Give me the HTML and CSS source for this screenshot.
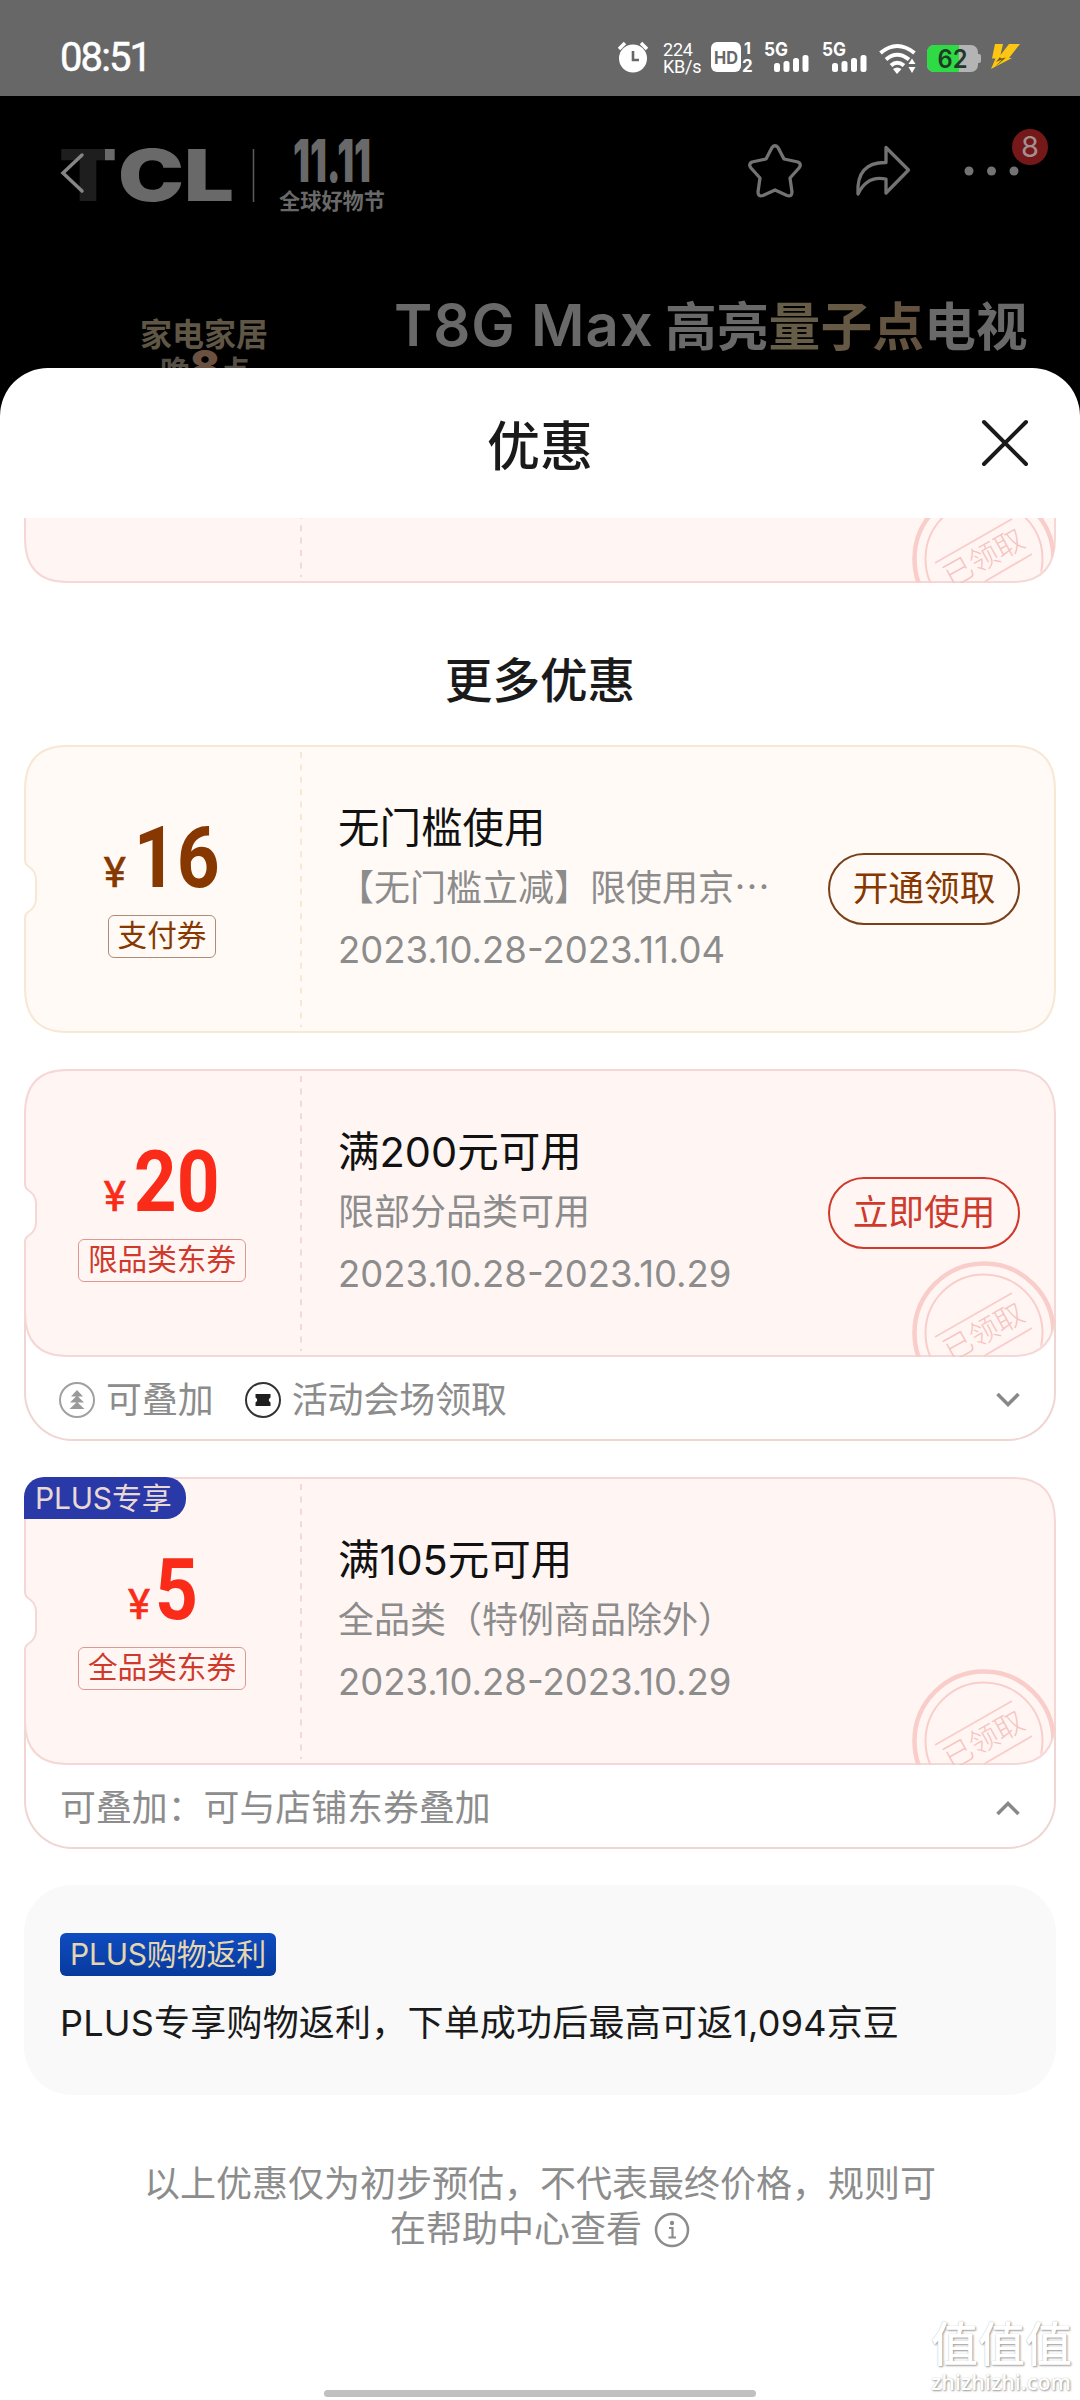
FILE: index.html
```html
<!DOCTYPE html>
<html lang="zh-CN">
<head>
<meta charset="utf-8">
<title>优惠</title>
<link rel="stylesheet" href="styles.css">
</head>
<body>
<svg class="defs" width="0" height="0" aria-hidden="true">
  <defs>
    <symbol id="ticket" viewBox="0 0 1032 288">
      <path class="ticket-shape" d="M43 1H989Q1031 1 1031 45V243Q1031 287 989 287H43Q1 287 1 243V173Q1 169 4 167Q12 162 12 154V134Q12 126 4 121Q1 119 1 115V45Q1 1 43 1Z"/>
      <path class="ticket-dash" d="M277 7V282"/>
    </symbol>
    <symbol id="stamp" viewBox="0 0 144 96">
      <g fill="none" stroke="#f9cdca">
        <circle cx="72" cy="72" r="69.500" stroke-width="4.500"/>
        <circle cx="72" cy="72" r="58.500" stroke-width="2"/>
        <path d="M23 76L100 32M72 95L120 67" stroke-width="2"/>
      </g>
      <text x="72" y="81" text-anchor="middle" transform="rotate(-29 72 71)" font-size="29" font-weight="300" fill="#f6c3bf">已领取</text>
    </symbol>
    <symbol id="signal" viewBox="0 0 46 32">
      <text x="0" y="15" font-size="19" font-weight="700" textLength="24" lengthAdjust="spacingAndGlyphs" fill="#fff">5G</text>
      <g fill="#fff"><rect x="10" y="22" width="6" height="9" rx="2.500"/><rect x="19.500" y="20" width="6" height="11" rx="2.500"/><rect x="29" y="17" width="6" height="14" rx="2.500"/><rect x="38.500" y="14" width="6" height="17" rx="2.500"/></g>
    </symbol>
  </defs>
</svg>

<div class="screen">
  <div class="status">
    <span class="clock">08:51</span>
    <div class="status-icons">
      <svg class="alarm" width="30" height="32" viewBox="0 0 30 32"><circle cx="15" cy="17.500" r="14" fill="#fff"/><path d="M1 8L7 2M29 8L23 2" stroke="#fff" stroke-width="3.500"/><path d="M15 10V19H21" fill="none" stroke="#676767" stroke-width="2.600"/></svg>
      <div class="speed"><span>224</span><span>KB/s</span></div>
      <svg class="hd" width="43" height="32" viewBox="0 0 43 32"><rect x="0" y="1" width="30" height="30" rx="6" fill="#fff"/><text x="3" y="22.500" font-size="18" font-weight="700" textLength="24" lengthAdjust="spacingAndGlyphs" fill="#676767">HD</text><text x="33" y="13" font-size="16" font-weight="700" fill="#fff">1</text><text x="31" y="31" font-size="17" font-weight="700" fill="#fff">2</text></svg>
      <svg class="sim" width="46" height="32"><use href="#signal"/></svg>
      <svg class="sim" width="46" height="32"><use href="#signal"/></svg>
      <svg class="wifi" width="37" height="32" viewBox="0 0 37 32"><g fill="none" stroke="#fff" stroke-width="4"><path d="M1.500 11Q18 -3 35.500 11"/><path d="M7 17.500Q18 8 30 17.500"/><path d="M12 23.500Q18 18 25 23.500"/></g><path d="M14 27Q18 24 22.500 27L18 32Z" fill="#fff"/><path d="M33 16.500L36.500 22H29.500ZM33 31L29.500 25H36.500Z" fill="#fff"/></svg>
      <svg class="battery" width="54" height="28" viewBox="0 0 54 28"><clipPath id="cell"><rect width="51" height="27" rx="7"/></clipPath><g clip-path="url(#cell)"><rect width="51" height="27" fill="#b4b4b4"/><rect width="32" height="27" fill="#2fdb45"/></g><path d="M51 9H52Q54 9 54 11V16Q54 18 52 18H51Z" fill="#b4b4b4"/><text x="10.500" y="22.500" font-size="25" font-weight="600" textLength="30" lengthAdjust="spacingAndGlyphs" fill="#1f3a26">62</text></svg>
      <svg class="bolt" width="30" height="26" viewBox="0 0 30 26"><path d="M4 0H12L9.500 11L18 0H29L18 14H21L0 25L4.500 14.500H1Z" fill="#fdc613"/><path d="M9 13L5 18L11 15.500L4 23L15 13.500L10 14.500Z" fill="#6b5a20"/></svg>
    </div>
  </div>

  <div class="hero">
    <div class="nav">
      <svg class="brand" width="330" height="90" viewBox="0 0 330 90">
        <defs><linearGradient id="fade"><stop offset=".8" stop-color="#1e1e1e"/><stop offset=".8" stop-color="#696969"/></linearGradient></defs>
        <text x="0" y="64" font-size="71" font-weight="900" textLength="58" lengthAdjust="spacingAndGlyphs" fill="url(#fade)">T</text>
        <text x="59" y="64" font-size="71" font-weight="900" textLength="116" lengthAdjust="spacingAndGlyphs" fill="#696969">CL</text>
        <path d="M194.500 12V65" stroke="#5c5c5c" stroke-width="1.500"/>
        <text x="234" y="45" font-size="59" font-weight="900" textLength="78" lengthAdjust="spacingAndGlyphs" fill="#696969">11.11</text>
        <text x="220" y="72" font-size="21.200" font-weight="600" fill="#696969">全球好物节</text>
        <path d="M23 18L4 36L23 54" fill="none" stroke="#858585" stroke-width="3.500" stroke-linecap="round"/>
      </svg>
      <div class="tools">
        <svg width="54" height="54" viewBox="0 0 54 54"><path d="M24 3.500Q27 0 30 3.500L36 15L50 18Q54 20 51 24L42 34L44 48Q44 53 39 51.500L27 46L15 51.500Q10 53 10 48L12 34L3 24Q0 20 4 18L18 15Z" fill="none" stroke="#737373" stroke-width="3.300" stroke-linejoin="round"/></svg>
        <svg width="56" height="54" viewBox="0 0 56 54"><path d="M31 3.500L53.500 26L31 49V35Q12 31 3 50Q1 18 31 18.500Z" fill="none" stroke="#737373" stroke-width="3.300" stroke-linejoin="round"/></svg>
        <div class="more">
          <svg width="56" height="10" viewBox="0 0 56 10"><g fill="#737373"><circle cx="5" cy="5" r="4.500"/><circle cx="27.500" cy="5" r="4.500"/><circle cx="50" cy="5" r="4.500"/></g></svg>
          <span class="badge">8</span>
        </div>
      </div>
    </div>
    <div class="banner">
      <div class="promo"><span class="promo-top">家电家居</span><span class="promo-bottom">晚<b>8</b>点</span></div>
      <div class="model"><span class="latin">T8G Max</span><span>高亮<em>量子点</em>电视</span></div>
    </div>
  </div>

  <div class="sheet">
    <div class="sheet-head">
      <h1>优惠</h1>
      <svg class="close" width="48" height="48" viewBox="0 0 48 48"><path d="M3 3L45 45M45 3L3 45" stroke="#1a1a1a" stroke-width="4" stroke-linecap="round"/></svg>
    </div>

    <div class="scrolled">
      <div class="ticket red"><svg class="ticket-bg"><use href="#ticket"/></svg><svg class="stamp"><use href="#stamp"/></svg></div>
    </div>

    <h2>更多优惠</h2>

    <div class="list">
      <div class="coupon">
        <div class="ticket gold">
          <svg class="ticket-bg"><use href="#ticket"/></svg>
          <div class="value"><div class="price"><i>¥</i><b>16</b></div><span class="tag">支付券</span></div>
          <div class="info"><h3>无门槛使用</h3><p>【无门槛立减】限使用京<span class="dots">…</span></p><time>2023.10.28-2023.11.04</time></div>
          <span class="action">开通领取</span>
        </div>
      </div>

      <div class="coupon">
        <div class="ticket red">
          <svg class="ticket-bg"><use href="#ticket"/></svg><svg class="stamp"><use href="#stamp"/></svg>
          <div class="value"><div class="price"><i>¥</i><b>20</b></div><span class="tag">限品类东券</span></div>
          <div class="info"><h3>满200元可用</h3><p>限部分品类可用</p><time>2023.10.28-2023.10.29</time></div>
          <span class="action">立即使用</span>
        </div>
        <div class="extra">
          <svg width="36" height="36" viewBox="0 0 36 36"><circle cx="18" cy="18" r="17" fill="none" stroke="#a0a0a0" stroke-width="2"/><path d="M18 8L24 14.500H12ZM18 13.500L25 20.500H11ZM18 20L25.500 27H10.500Z" fill="#999"/></svg>
          <span class="note">可叠加</span>
          <svg width="36" height="36" viewBox="0 0 36 36"><circle cx="18" cy="18" r="17" fill="none" stroke="#333" stroke-width="2"/><path d="M10.500 12H25.500V15.500Q22 18 25.500 20.500V24H10.500V20.500Q14 18 10.500 15.500Z" fill="#1f1f1f"/></svg>
          <span class="note">活动会场领取</span>
          <svg class="chevron" width="26" height="16" viewBox="0 0 26 16"><path d="M2.500 2L13 12.500L23.500 2" fill="none" stroke="#888" stroke-width="3.500"/></svg>
        </div>
      </div>

      <div class="coupon">
        <div class="ticket red">
          <svg class="ticket-bg"><use href="#ticket"/></svg><svg class="stamp"><use href="#stamp"/></svg>
          <span class="ribbon">PLUS专享</span>
          <div class="value"><div class="price"><i>¥</i><b>5</b></div><span class="tag">全品类东券</span></div>
          <div class="info"><h3>满105元可用</h3><p>全品类（特例商品除外）</p><time>2023.10.28-2023.10.29</time></div>
        </div>
        <div class="extra">
          <span class="note">可叠加：可与店铺东券叠加</span>
          <svg class="chevron" width="26" height="16" viewBox="0 0 26 16"><path d="M2.500 14L13 3.500L23.500 14" fill="none" stroke="#888" stroke-width="3.500"/></svg>
        </div>
      </div>
    </div>

    <div class="rebate">
      <span class="rebate-tag">PLUS购物返利</span>
      <p>PLUS专享购物返利，下单成功后最高可返1,094京豆</p>
    </div>

    <div class="disclaimer">
      <span>以上优惠仅为初步预估，不代表最终价格，规则可</span>
      <span class="help">在帮助中心查看<svg width="36" height="36" viewBox="0 0 36 36"><circle cx="18" cy="18" r="16" fill="none" stroke="#8c8c8c" stroke-width="2.500"/><circle cx="18" cy="11" r="2.200" fill="#8c8c8c"/><path d="M15 16H18.500V25M14.500 25.500H22" fill="none" stroke="#8c8c8c" stroke-width="2.200"/></svg></span>
    </div>

    <div class="home-bar"></div>
    <div class="watermark"><span class="wm-name">值值值</span><span class="wm-url">zhizhizhi.com</span></div>
  </div>
</div>
</body>
</html>
```

FILE: styles.css
```css
* { box-sizing: border-box; }
body, h1, h2, h3, p { margin: 0; }
body { width: 1080px; background: #000; font-family: Inter, "Noto Sans CJK SC", sans-serif; color: #1a1a1a; }
svg { display: block; flex: none; }
.defs { position: absolute; }
.screen { width: 1080px; height: 2400px; overflow: hidden; background: #000; }

/* status bar */
.status { height: 96px; background: #676767; padding: 41px 59px 0 60px; display: flex; justify-content: space-between; color: #fff; }
.clock { font: 400 40px/34px Roboto, sans-serif; letter-spacing: -1.9px; -webkit-text-stroke: .5px #fff; }
.status-icons { display: flex; align-items: flex-start; height: 32px; }
.speed { width: 36px; margin: 0 12px 0 15px; display: flex; flex-direction: column; font: 400 18px/17px Roboto, sans-serif; letter-spacing: -.2px; white-space: nowrap; }
.hd { margin-right: 10px; }
.sim { margin-right: 11.500px; }
.wifi { margin: 1px 11px 0 0; }
.battery { margin: 4px 10px 0 0; }
.bolt { margin-top: 3px; }

/* page behind the sheet */
.hero { height: 272px; }
.nav { height: 190px; padding: 41px 51px 0 59px; display: flex; justify-content: space-between; }
.tools { display: flex; gap: 54px; padding-top: 7px; }
.tools > svg:first-child { margin-right: -1px; }
.more { position: relative; width: 65px; padding-top: 22px; margin-left: -1px; }
.badge { position: absolute; left: 48px; top: -15px; width: 36px; height: 36px; border-radius: 50%; background: #741819; color: #a49090; font-size: 29px; line-height: 36px; text-align: center; }
.banner { display: flex; height: 82px; padding-left: 140px; overflow: hidden; }
.promo { width: 254px; display: flex; flex-direction: column; padding-top: 33px; color: #5f5645; font-weight: 700; }
.promo-top { font-size: 32px; line-height: 32px; }
.promo-bottom { font-size: 30px; line-height: 30px; padding: 5px 0 0 20px; color: #554f45; }
.promo-bottom b { font-size: 44px; line-height: 20px; color: #6b5240; }
.model { display: flex; align-items: baseline; font-size: 51.8px; line-height: 78px; font-weight: 700; color: #696969; white-space: nowrap; }
.latin { width: 271px; font-weight: 600; font-size: 58px; letter-spacing: .9px; }
.model em { font-style: normal; background: linear-gradient(90deg, #675f49, #62513e); -webkit-background-clip: text; color: transparent; }

/* sheet */
.sheet { position: relative; height: 2032px; background: #fff; border-radius: 48px 48px 0 0; }
.sheet-head { height: 150px; padding: 0 51px; display: grid; grid-template-columns: 48px 1fr 48px; align-items: center; }
h1 { grid-column: 2; font-size: 53px; line-height: 60px; font-weight: 500; text-align: center; padding-top: 7px; }
.scrolled { height: 65px; padding: 0 24px; overflow: hidden; display: flex; align-items: flex-end; }
h2 { height: 162px; padding-top: 68px; font-size: 47.6px; line-height: 60px; font-weight: 500; text-align: center; }

/* coupons */
.list { padding: 0 24px; display: flex; flex-direction: column; gap: 37px; }
.coupon:first-child { margin-bottom: -1px; }
.ticket { position: relative; z-index: 1; flex: none; width: 1032px; height: 288px; display: flex; align-items: center; --tone: #fa2c19; --fill: #fff6f4; --edge: #f5d8d6; --line: #cf3a2c; --soft: #dc9994; }
.gold { --tone: #873800; --fill: #fffaf6; --edge: #f7e8d5; --line: #784019; --soft: #ad8c79; }
.ticket-bg { position: absolute; left: 0; top: 0; width: 1032px; height: 288px; z-index: -1; }
.ticket-shape { fill: var(--fill); stroke: var(--edge); stroke-width: 2; }
.ticket-dash { stroke: var(--edge); stroke-width: 2; stroke-dasharray: 6 6.400; }
.stamp { position: absolute; right: 0; bottom: 0; width: 144px; height: 96px; border-bottom-right-radius: 44px; }
.value { width: 277px; padding-right: 1px; display: flex; flex-direction: column; align-items: center; color: var(--tone); }
.price { height: 76px; display: flex; align-items: baseline; justify-content: center; font-family: Roboto, sans-serif; line-height: 76px; }
.price i { font-style: normal; font-weight: 400; font-size: 42px; margin-right: 7px; -webkit-text-stroke: .6px var(--tone); }
.price b { font-size: 85px; transform: scaleX(.88); margin: 0 -5px; }
.tag { margin-top: 19px; height: 43px; padding: 0 9px; border: 1.500px solid var(--soft); border-radius: 6px; font-size: 29.6px; line-height: 38px; color: var(--line); }
.gold .tag { color: var(--tone); }
.info { width: 527px; padding: 1px 0 0 37px; white-space: nowrap; }
h3 { font-size: 41.5px; line-height: 60px; font-weight: 400; color: #111; }
.info p { font-size: 36px; line-height: 60px; height: 60px; color: #8c8c8c; }
.info time { display: block; font-size: 36.500px; line-height: 64px; letter-spacing: 0; color: #8c8c8c; }
.dots { font-family: "Noto Sans CJK SC", sans-serif; line-height: 1; }
.action { width: 192px; height: 72px; border: 2px solid var(--line); border-radius: 36px; font-size: 35.7px; line-height: 67px; text-align: center; color: var(--line); }
.gold .action { color: var(--tone); }
.ribbon { position: absolute; left: 0; top: 0; width: 162px; height: 42px; border-radius: 20px 20px 20px 0; background: #2939a8; color: #ead9d3; font-size: 30px; line-height: 42px; padding-left: 11px; letter-spacing: -.2px; white-space: nowrap; }
.extra { height: 144px; margin-top: -60px; padding: 63px 33px 0; border: 2px solid #efd6d3; border-top: 0; border-radius: 0 0 48px 48px; background: #fff; display: flex; align-items: center; }
.coupon:nth-child(2) { margin-bottom: -1px; }
.note { font-size: 35.900px; line-height: 54px; color: #8c8c8c; padding-left: 11px; margin-right: 31px; }
.note:first-child { padding-left: 1px; }
.chevron { margin-left: auto; }

/* rebate */
.rebate { margin: 36px 24px 0; height: 210px; padding: 48px 36px; border-radius: 48px; background: #f9f9f9; display: flex; flex-direction: column; align-items: flex-start; }
.rebate-tag { height: 43px; width: 216px; border-radius: 6px; background: linear-gradient(#0f4cc2, #073a9d); color: #e5d7ad; font-size: 30px; line-height: 43px; text-align: center; letter-spacing: -.2px; white-space: nowrap; }
.rebate p { font-size: 36px; line-height: 54px; margin-top: 20px; letter-spacing: .2px; white-space: nowrap; }

.disclaimer { padding-top: 67px; display: flex; flex-direction: column; align-items: center; font-size: 36px; line-height: 45px; color: #8c8c8c; }
.help { display: flex; align-items: center; gap: 12px; }

.home-bar { position: absolute; left: 324px; bottom: 3px; width: 432px; height: 7px; border-radius: 4px; background: #c0c0c0; }
.watermark { position: absolute; right: 7px; bottom: 6px; width: 142px; display: flex; flex-direction: column; color: #fff; text-shadow: 1px 1px 2px #999, 0 0 1px #bbb; white-space: nowrap; }
.wm-name { font-size: 47px; line-height: 52px; font-weight: 500; }
.wm-url { font: 600 21.5px/24px "Open Sans", sans-serif; }
```
